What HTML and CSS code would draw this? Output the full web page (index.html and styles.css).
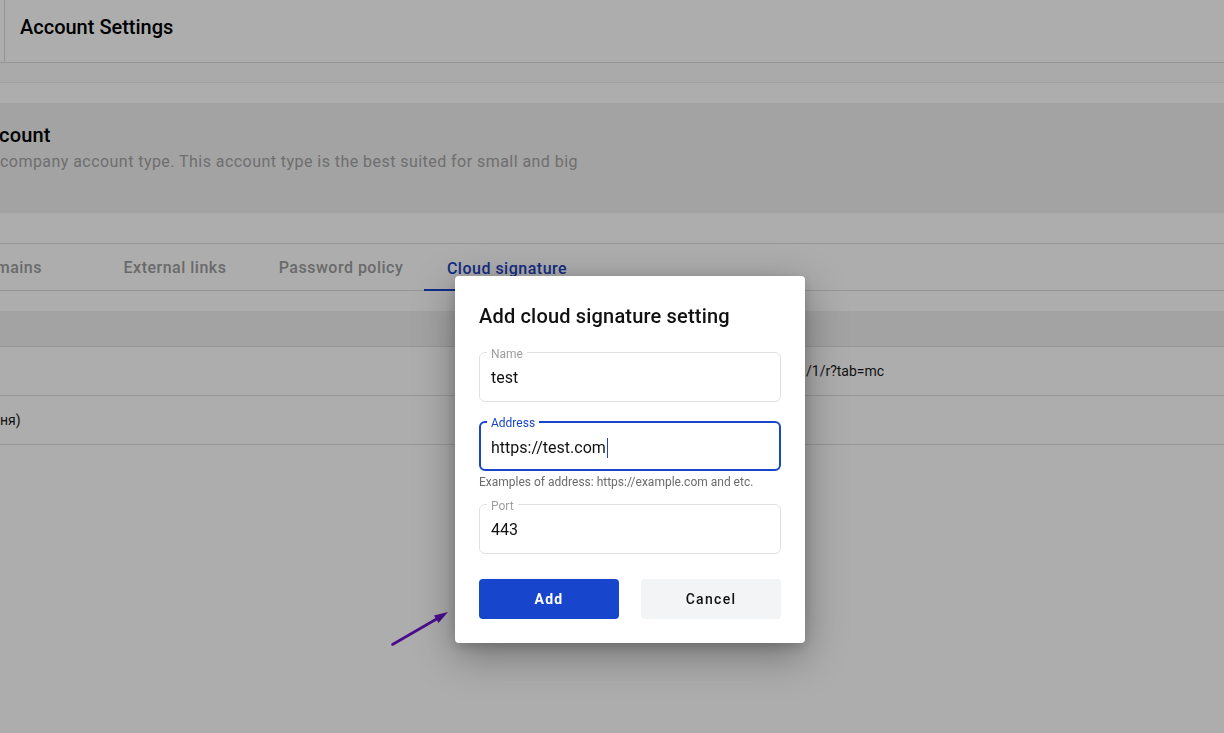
FILE: index.html
```html
<!DOCTYPE html>
<html lang="en">
<head>
<meta charset="utf-8">
<title>Account Settings</title>
<link rel="stylesheet" href="styles.css">
</head>
<body>
<div class="page">
  <header class="topbar">
    <div class="rail"></div>
    <h1 class="title">Account Settings</h1>
  </header>
  <div class="strip"></div>
  <section class="account">
    <h2 class="account-name">count</h2>
    <p class="account-desc">company account type. This account type is the best suited for small and big</p>
  </section>
  <nav class="tabs">
    <div class="tab tab-first">mains</div>
    <div class="tab">External links</div>
    <div class="tab">Password policy</div>
    <div class="tab tab-active">Cloud signature</div>
  </nav>
  <div class="table">
    <div class="thead"></div>
    <div class="row"><span class="cell cell-right">/1/r?tab=mc</span></div>
    <div class="row"><span class="cell">ня)</span></div>
  </div>
</div>

<div class="overlay"></div>

<svg class="arrow" width="64" height="44" viewBox="388 606 64 44" aria-hidden="true">
  <line x1="392.5" y1="644.5" x2="440" y2="617" stroke="#4a0d8c" stroke-width="2.6" stroke-linecap="round"/>
  <polygon points="448,612 434,615.5 438.5,623" fill="#4a0d8c"/>
</svg>

<div class="dialog" role="dialog">
  <h3 class="dialog-title">Add cloud signature setting</h3>
  <fieldset class="field">
    <legend class="field-label">Name</legend>
    <div class="field-value">test</div>
  </fieldset>
  <fieldset class="field field-focus">
    <legend class="field-label">Address</legend>
    <div class="field-value">https://test.com<span class="caret"></span></div>
  </fieldset>
  <div class="helper">Examples of address: https://example.com and etc.</div>
  <fieldset class="field field-port">
    <legend class="field-label">Port</legend>
    <div class="field-value">443</div>
  </fieldset>
  <div class="actions">
    <button class="btn btn-primary">Add</button>
    <button class="btn btn-secondary">Cancel</button>
  </div>
</div>
</body>
</html>
```

FILE: styles.css
```css
* { box-sizing: border-box; }
html, body { margin: 0; padding: 0; }
body {
  width: 1224px;
  height: 733px;
  overflow: hidden;
  background: #ffffff;
  font-family: Roboto, "Noto Sans", "Liberation Sans", sans-serif;
  color: #111;
}
.page { display: flex; flex-direction: column; }

.topbar {
  display: flex;
  align-items: flex-start;
  height: 63px;
  border-bottom: 1px solid #dddddd;
}
.rail { width: 5px; height: 100%; border-right: 1px solid #dddddd; }
.title {
  margin: 15px 0 0 15px;
  font-size: 20px;
  font-weight: 500;
  color: #000;
  line-height: 24px;
}
.strip {
  height: 20px;
  border-bottom: 1px solid #ececec;
  background: #fbfbfb;
}
.account {
  margin-top: 20px;
  height: 110px;
  background: #f0f0f1;
  padding: 20px 0 0 0;
}
.account-name {
  margin: 0 0 0 -1px;
  font-size: 20px;
  font-weight: 500;
  line-height: 24px;
  letter-spacing: 0.2px;
  color: #000;
}
.account-desc {
  margin: 5px 0 0 0;
  font-size: 16px;
  line-height: 20px;
  color: #a4a4a4;
  letter-spacing: 0.45px;
}

.tabs {
  display: flex;
  margin-top: 30px;
  height: 48px;
  border-top: 1px solid #dddddd;
  border-bottom: 1px solid #dddddd;
}
.tab {
  width: 166px;
  flex: none;
  display: flex;
  align-items: center;
  justify-content: center;
  font-size: 16px;
  font-weight: 500;
  letter-spacing: 0.5px;
  color: #9d9d9d;
  padding-top: 1px;
}
.tab-first { width: 92px; justify-content: flex-end; padding-right: 50px; }
.tab-active {
  color: #1d43c0;
  border-bottom: 2px solid #1745cb;
  margin-bottom: -1px;
  padding-top: 3px;
}

.table { margin-top: 20px; }
.thead {
  height: 36px;
  background: #f0f0f0;
  border-bottom: 1px solid #dddddd;
}
.row {
  height: 49px;
  display: flex;
  align-items: center;
  border-bottom: 1px solid #dddddd;
  font-size: 14px;
  color: #1a1a1a;
}
.cell-right { margin-left: 806px; }

.overlay {
  position: fixed;
  inset: 0;
  background: rgba(0, 0, 0, 0.32);
}

.arrow { position: absolute; left: 388px; top: 606px; }

.dialog {
  position: absolute;
  left: 455px;
  top: 276px;
  width: 350px;
  background: #fff;
  border-radius: 4px;
  padding: 25px 24px 24px;
  box-shadow: 0 12px 40px rgba(0, 0, 0, 0.35), 0 4px 12px rgba(0, 0, 0, 0.15);
}
.dialog-title {
  margin: 0 0 12px;
  font-size: 20px;
  font-weight: 500;
  line-height: 30px;
  letter-spacing: 0.18px;
  color: #111;
}
.field {
  margin: 0;
  padding: 0 11px;
  border: 1px solid #e0e0e0;
  border-radius: 6px;
  min-width: 0;
}
.field + .field { margin-top: 11px; }
.field-label {
  margin-left: -4px;
  padding: 4px 4px 0;
  font-size: 12px;
  line-height: 14px;
  color: #9e9e9e;
}
.field-value {
  padding: 7px 0 13px;
  font-size: 16px;
  line-height: 20px;
  color: #111;
}
.field-focus {
  border: 2px solid #1745cb;
  padding: 0 10px;
}
.field-focus .field-label { color: #1745cb; padding-top: 3px; }
.field-focus .field-value { padding: 8px 0 11px; }
.caret {
  display: inline-block;
  width: 1px;
  height: 20px;
  margin-left: 1px;
  background: #1745cb;
  vertical-align: top;
}
.helper {
  margin-top: 3px;
  font-size: 12px;
  line-height: 16px;
  color: #6b6b6b;
}
.field-port { margin-top: 5px; }

.actions {
  display: flex;
  gap: 22px;
  margin-top: 25px;
}
.btn {
  width: 140px;
  height: 40px;
  border: 0;
  border-radius: 4px;
  font-family: Roboto, "Noto Sans", "Liberation Sans", sans-serif;
  font-size: 14px;
  font-weight: 500;
  letter-spacing: 1.3px;
  cursor: pointer;
}
.btn-primary { background: #1745cb; color: #fff; font-weight: 700; }
.btn-secondary { background: #f3f4f6; color: #111; }
```
